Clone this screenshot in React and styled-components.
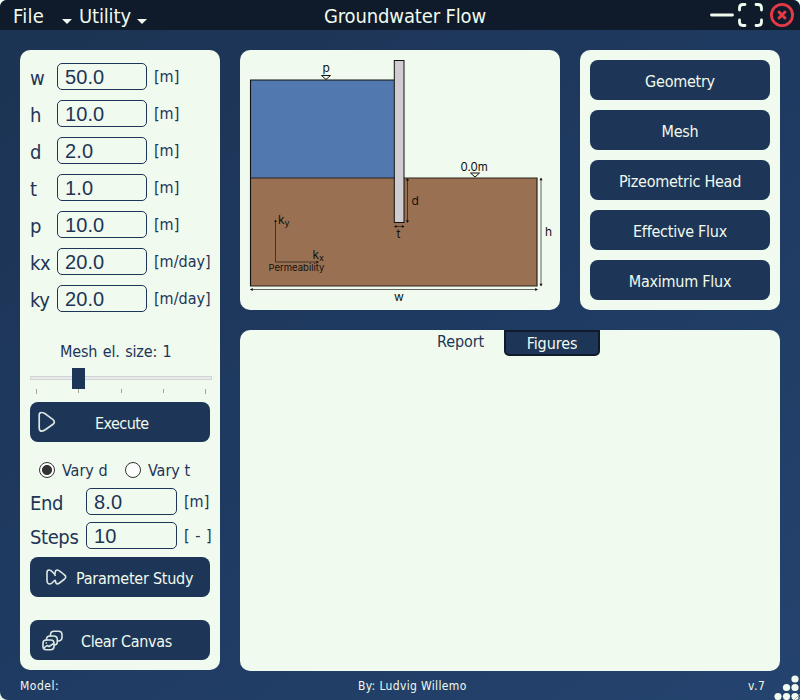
import React, { useState } from "react";
import styled, { createGlobalStyle, css } from "styled-components";

const cream = "#f1faee";
const navy = "#1d3557";
const ink = "#0f1b2b";
const uiFont = '"DejaVu Sans Condensed", "Noto Sans", sans-serif';

const GlobalStyle = createGlobalStyle`
  * { box-sizing: border-box; }
  body { margin: 0; background: ${cream}; }
  button, input { font: inherit; margin: 0; }
`;

const Window = styled.div`
  width: 800px;
  height: 700px;
  display: grid;
  grid-template-rows: 30px 640px 30px;
  border-radius: 7px 7px 2px 8px;
  overflow: hidden;
  background: linear-gradient(145deg, #1c3352 0%, #1f3a61 50%, #24436e 100%);
  color: ${cream};
  font-family: ${uiFont};
  white-space: nowrap;
`;

const TitleBar = styled.header`
  display: grid;
  grid-template-columns: 310px 190px 1fr;
  align-items: center;
  background: ${ink};
  font-size: 20px;
`;

const Menus = styled.nav`
  display: flex;
  gap: 7px;
  padding-left: 13px;
`;

const MenuButton = styled.button`
  display: flex;
  width: ${(p) => p.$width}px;
  height: 30px;
  padding: 0;
  border: 0;
  background: none;
  color: inherit;
  line-height: 32px;
  letter-spacing: ${(p) => p.$track || 0}px;
`;

const Caret = styled.i`
  width: 0;
  height: 0;
  margin: 19px 0 0 auto;
  border: 5px solid transparent;
  border-top-color: ${cream};
  border-bottom: 0;
`;

const Title = styled.h1`
  margin: 0;
  font-size: 20px;
  font-weight: 400;
  line-height: 32px;
  height: 30px;
  text-align: center;
  letter-spacing: -0.13px;
`;

const Controls = styled.div`
  display: flex;
  justify-content: flex-end;
  padding-right: 4px;
`;

const Body = styled.main`
  display: grid;
  grid-template-columns: 200px 320px 200px;
  grid-template-rows: 260px 341px;
  gap: 20px;
  padding: 20px 20px 0;
`;

const Panel = styled.section`
  border-radius: 10px;
  background: ${cream};
  color: ${navy};
`;

const Sidebar = styled(Panel)`
  grid-row: 1 / 3;
  height: 620px;
  padding: 13px 8px 0 10px;
`;

const Fields = styled.div`
  display: grid;
  grid-auto-rows: 27px;
  row-gap: ${(p) => p.$gap}px;
`;

const FieldRow = styled.label`
  display: grid;
  grid-template-columns: ${(p) => (p.$wide ? "56px 91px" : "27px 90px")} 1fr;
`;

const FieldName = styled.span`
  height: 27px;
  font-size: 20px;
  line-height: 31px;
  letter-spacing: -0.4px;
`;

const NumberInput = styled.input`
  width: 100%;
  height: 27px;
  padding: 1px 0 0 7px;
  border: 1px solid ${navy};
  border-radius: 5px;
  outline: 0;
  background: transparent;
  color: ${navy};
  && {
    font: 20px "Liberation Sans", Arial, sans-serif;
    letter-spacing: 0.1px;
  }
`;

const Unit = styled.span`
  height: 27px;
  padding-left: 7px;
  font-size: 16px;
  line-height: 28px;
  word-spacing: 1px;
`;

const SliderTitle = styled.div`
  margin-top: 28px;
  padding-left: 30px;
  height: 24px;
  font-size: 16px;
  line-height: 24px;
  letter-spacing: -0.15px;
  word-spacing: 1px;
`;

const Slider = styled.div`
  width: 182px;
  height: 26px;
  margin-top: 4px;
`;

const Groove = styled.div`
  display: flex;
  height: 21px;
  padding-left: 42px;
  background:
    linear-gradient(#e7eaea, #e7eaea) 1px 9px / 180px 2px no-repeat,
    linear-gradient(#d3d5d5, #d3d5d5) 0 8px / 100% 4px no-repeat;
`;

const Handle = styled.span`
  width: 13px;
  height: 21px;
  background: ${navy};
`;

const Ticks = styled.div`
  display: flex;
  justify-content: space-between;
  padding: 0 6px;
`;

const Tick = styled.i`
  width: 1px;
  height: 4px;
  background: #a9a59b;
  &:first-child, &:last-child { height: 5px; }
`;

const Button = styled.button`
  display: flex;
  align-items: center;
  justify-content: center;
  width: 180px;
  height: 40px;
  padding: 0;
  border: 0;
  border-radius: 8px;
  background: ${navy};
  color: ${cream};
  ${(p) => p.$top != null && css`margin-top: ${p.$top}px;`}
`;

const ButtonText = styled.span`
  padding-top: 3px;
  font-size: 16px;
  line-height: 24px;
  letter-spacing: ${(p) => p.$track ?? -0.25}px;
`;

const IconButton = styled(Button)`
  justify-content: flex-start;
  padding-left: ${(p) => p.$inset}px;
  gap: ${(p) => p.$gap}px;
`;

const Radios = styled.div`
  display: flex;
  height: 24px;
  margin: 16px 0 6px;
  padding-left: 9px;
`;

const RadioOption = styled.label`
  display: flex;
  align-items: center;
  width: 86px;
  gap: 7px;
`;

const RadioText = styled.span`
  padding-top: 2px;
  font-size: 16px;
  line-height: 24px;
`;

const Radio = styled.input.attrs({ type: "radio" })`
  appearance: none;
  width: 16px;
  height: 16px;
  border: 1px solid #333;
  border-radius: 50%;
  background: ${(p) => (p.checked ? "radial-gradient(circle, #333 4.6px, #fff 5.4px)" : "#fff")};
`;

const PlotButtons = styled(Panel)`
  display: grid;
  grid-auto-rows: 40px;
  gap: 10px;
  padding: 10px;
`;

const Output = styled(Panel)`
  grid-column: 2 / 4;
  overflow: hidden;
`;

const Tabs = styled.div`
  display: flex;
  padding-left: 177px;
`;

const Tab = styled.button`
  display: flex;
  justify-content: center;
  width: ${(p) => (p.$active ? 96 : 87)}px;
  height: 26px;
  padding: 0;
  border: 2px solid ${(p) => (p.$active ? ink : "transparent")};
  border-radius: 0 0 5px 5px;
  background: ${(p) => (p.$active ? navy : "transparent")};
  color: ${(p) => (p.$active ? cream : navy)};
`;

const TabText = styled.span`
  height: ${(p) => (p.$active ? 20 : 18)}px;
  overflow: hidden;
  font-size: 16px;
  line-height: ${(p) => (p.$active ? 24 : 20)}px;
  letter-spacing: -0.1px;
`;

const StatusBar = styled.footer`
  display: grid;
  grid-template-columns: 338px 390px 20px 32px;
  padding-left: 20px;
  font-size: 12px;
  line-height: 33px;
`;

const StatusText = styled.span`
  height: 30px;
  letter-spacing: ${(p) => p.$track}px;
`;

const Grip = styled.svg`
  display: block;
  width: 32px;
  height: 30px;
`;

const Drawing = styled.svg`
  display: block;
`;

const SvgText = styled.text`
  font-family: Inter, sans-serif;
  font-size: ${(p) => p.$size || 12}px;
  fill: #111;
`;

function Diagram() {
  return (
    <Drawing width="320" height="260" viewBox="240 50 320 260">
      <rect x="250.5" y="80" width="144" height="98" fill="#5179b0" />
      <rect x="250.5" y="178" width="286.5" height="108" fill="#997152" />
      <path d="M250.5 286V80H394" fill="none" stroke="#111" strokeWidth="1.1" />
      <path d="M250.5 178H537V286H250" fill="none" stroke="#2b221b" strokeWidth="1.2" />
      <rect x="394.3" y="60.5" width="9.7" height="162" fill="#cfcdcf" stroke="#111" strokeWidth="1" />
      <g fill="none" stroke="#111" strokeWidth="1">
        <path d="M321.5 75.5h9l-4.5 4z" />
        <path d="M470.5 173h9l-4.5 4z" />
      </g>
      <g fill="none" stroke="#111" strokeWidth=".65">
        <path d="M407.5 179.5V221.5M541 178.5V285.5M250.5 289.5H537M395 226.5h8.5M275.5 221v41h42" />
      </g>
      <g fill="#111">
        <path d="M407.5 178l1.5 2.8h-3zM407.5 223l1.5-2.8h-3zM541 177.5l1.5 2.8h-3zM541 286.5l1.5-2.8h-3z" />
        <path d="M250 289.5l2.8-1.5v3zM538 289.5l-2.8-1.5v3zM394 226.5l2.5-1.5v3zM404.5 226.5l-2.5-1.5v3z" />
        <path d="M275.5 219.5l1.4 2.500h-2.8zM319 262l-2.5-1.4v2.8z" />
      </g>
      <SvgText x="322.5" y="72">p</SvgText>
      <SvgText x="460.5" y="170.500" $size={11.5}>0.0m</SvgText>
      <SvgText x="411.5" y="205">d</SvgText>
      <SvgText x="396.5" y="237.5">t</SvgText>
      <SvgText x="545" y="236">h</SvgText>
      <SvgText x="394" y="301">w</SvgText>
      <SvgText x="278" y="224">k<tspan dy="2" fontSize="9">y</tspan></SvgText>
      <SvgText x="312.5" y="259">k<tspan dy="2" fontSize="9">x</tspan></SvgText>
      <SvgText x="268.5" y="271" $size={9.5}>Permeability</SvgText>
    </Drawing>
  );
}

const PlayIcon = () => (
  <svg width="18" height="22" viewBox="0 0 18 22" fill="none" stroke="#dbe8e2" strokeWidth="1.7" strokeLinejoin="round">
    <path d="M1.2 4.5Q1 1.3 3.900 1.500Q5.500 1.500 8 3.300L15 8.700Q17.700 11 15 13.300L8 18.300Q4 21.300 2 19.500Q1.200 18.500 1.200 17Z" />
  </svg>
);

const ForwardIcon = () => (
  <svg width="21" height="16" viewBox="0 0 21 16" fill="none" stroke="#dbe8e2" strokeWidth="1.6" strokeLinejoin="round">
    <path d="M1 3.5Q1 1 3.2 1Q5 1 7.5 4Q9.3 5.5 9.3 3Q9.5 .9 11.5 1Q13 1.200 18 5.5Q21.500 8 18 10.5L13.5 14Q10.5 16 9.7 13.5Q9.5 10.5 8.5 11.5L6 14Q3.500 16 1.700 14Q1 13 1 11.5Z" />
    <path d="M7.5 4Q9 5.300 9.4 7" />
  </svg>
);

const CanvasIcon = () => (
  <svg width="21" height="21" viewBox="0 0 21 21" fill="none" stroke="#dbe8e2" strokeWidth="1.6" strokeLinejoin="round" strokeLinecap="round">
    <rect x="1" y="10" width="11" height="9.8" rx="3.2" />
    <path d="M4.5 10V9.500Q4.5 6 8 6H11.500Q15.3 6 15.3 9.500V11.5Q15.3 15 12.3 15" />
    <path d="M8.5 6V4.8Q8.5 1.2 12 1.2H16.5Q20 1.2 20 4.8V7.5Q20 10.7 16 11" />
    <path d="M2.5 17.5L5 15.5L7 16.5L11 13.8M4.2 13h.2" />
  </svg>
);

const WindowIcons = () => (
  <svg width="86" height="30" viewBox="0 0 86 30" fill="none" strokeWidth="3" strokeLinecap="round">
    <path d="M1.5 15h21" stroke={cream} strokeWidth="2.8" />
    <path d="M29.500 10V8Q29.5 4.5 33 4.5H35M46 4.5H48Q51.5 4.5 51.5 8V10M51.5 20V22Q51.5 25.5 48 25.5H46M35 25.5H33Q29.5 25.5 29.5 22V20" stroke={cream} strokeWidth="2.8" />
    <circle cx="72" cy="15" r="10.6" stroke="#e63946" strokeWidth="2.8" />
    <path d="M69 12l6 6M75 12l-6 6" stroke="#e63946" />
  </svg>
);

const gripDots = [[27, 9], [18.5, 17.5], [27, 17.5], [10, 26.5], [18.5, 26.5], [27, 26.5]];

const geometryFields = [
  ["w", "50.0", "[m]"],
  ["h", "10.0", "[m]"],
  ["d", "2.0", "[m]"],
  ["t", "1.0", "[m]"],
  ["p", "10.0", "[m]"],
  ["kx", "20.0", "[m/day]"],
  ["ky", "20.0", "[m/day]"],
];
const studyFields = [
  ["End", "8.0", "[m]"],
  ["Steps", "10", "[ - ]"],
];
const plots = ["Geometry", "Mesh", "Pizeometric Head", "Effective Flux", "Maximum Flux"];

function Field({ name, value, unit, wide }) {
  return (
    <FieldRow $wide={wide}>
      <FieldName>{name}</FieldName>
      <NumberInput defaultValue={value} />
      <Unit>{unit}</Unit>
    </FieldRow>
  );
}

export default function App() {
  const [vary, setVary] = useState("d");
  const [tab, setTab] = useState("Figures");
  return (
    <>
      <GlobalStyle />
      <Window>
        <TitleBar>
          <Menus>
            <MenuButton $width={59} $track={0.3}>File<Caret /></MenuButton>
            <MenuButton $width={68} $track={-0.15}>Utility<Caret /></MenuButton>
          </Menus>
          <Title>Groundwater Flow</Title>
          <Controls><WindowIcons /></Controls>
        </TitleBar>
        <Body>
          <Sidebar>
            <Fields $gap={10}>
              {geometryFields.map(([n, v, u]) => <Field key={n} name={n} value={v} unit={u} />)}
            </Fields>
            <SliderTitle>Mesh el. size: 1</SliderTitle>
            <Slider>
              <Groove><Handle /></Groove>
              <Ticks>{[0, 1, 2, 3, 4].map((t) => <Tick key={t} />)}</Ticks>
            </Slider>
            <IconButton $top={8} $inset={8} $gap={39}><PlayIcon /><ButtonText $track={-0.55}>Execute</ButtonText></IconButton>
            <Radios>
              {["d", "t"].map((v) => (
                <RadioOption key={v}>
                  <Radio name="vary" checked={vary === v} onChange={() => setVary(v)} />
                  <RadioText>Vary {v}</RadioText>
                </RadioOption>
              ))}
            </Radios>
            <Fields $gap={7}>
              {studyFields.map(([n, v, u]) => <Field key={n} name={n} value={v} unit={u} wide />)}
            </Fields>
            <IconButton $top={8} $inset={16} $gap={9}><ForwardIcon /><ButtonText>Parameter Study</ButtonText></IconButton>
            <IconButton $top={23} $inset={12} $gap={18}><CanvasIcon /><ButtonText $track={-0.35}>Clear Canvas</ButtonText></IconButton>
          </Sidebar>
          <Panel><Diagram /></Panel>
          <PlotButtons>
            {plots.map((p) => <Button key={p}><ButtonText>{p}</ButtonText></Button>)}
          </PlotButtons>
          <Output>
            <Tabs>
              {["Report", "Figures"].map((t) => (
                <Tab key={t} $active={tab === t} onClick={() => setTab(t)}>
                  <TabText $active={tab === t}>{t}</TabText>
                </Tab>
              ))}
            </Tabs>
          </Output>
        </Body>
        <StatusBar>
          <StatusText $track={0.5}>Model:</StatusText>
          <StatusText $track={0.35}>By: Ludvig Willemo</StatusText>
          <StatusText $track={0.6}>v.7</StatusText>
          <Grip viewBox="0 0 32 30">
            {gripDots.map(([x, y]) => <circle key={`${x}-${y}`} cx={x} cy={y} r="3.6" fill={cream} />)}
            <path d="M26 30L32 24M29 30L32 27" stroke="#9aa39c" strokeWidth=".8" />
          </Grip>
        </StatusBar>
      </Window>
    </>
  );
}
